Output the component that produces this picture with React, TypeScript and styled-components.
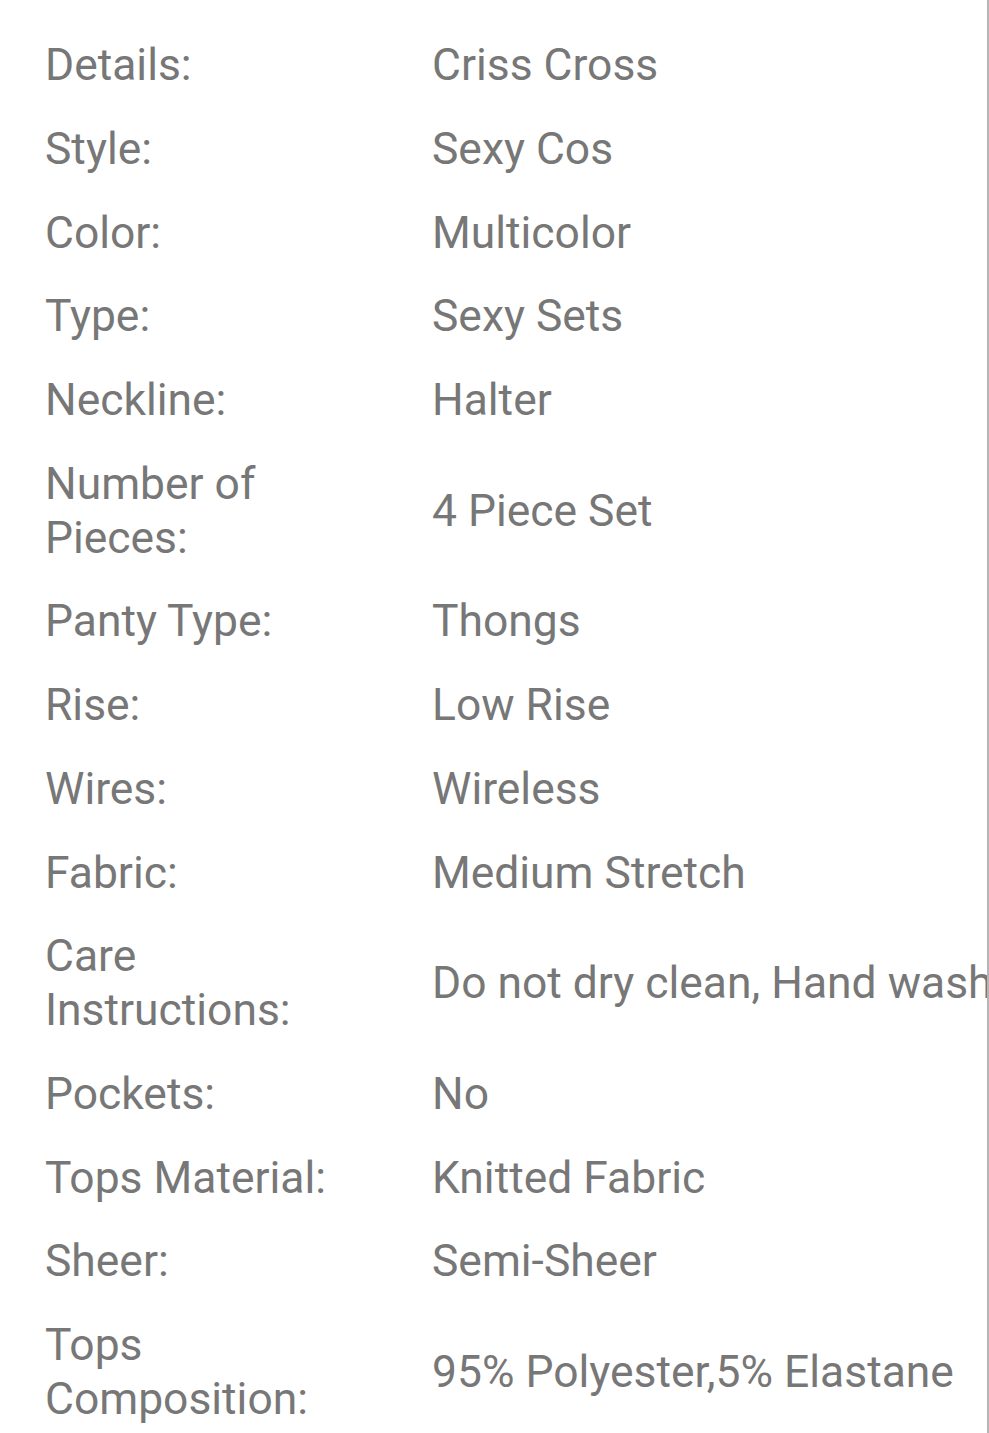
import React from "react";
import styled, { createGlobalStyle } from "styled-components";

const GlobalStyle = createGlobalStyle`
  html, body {
    margin: 0;
    padding: 0;
    background: #ffffff;
  }
  body {
    font-family: Roboto, "Noto Sans", "Liberation Sans", sans-serif;
  }
`;

const Panel = styled.div`
  width: 989px;
  min-height: 100vh;
  box-sizing: border-box;
  border-right: 2px solid #b5b5b5;
  overflow: hidden;
  padding: 24px 0 0 45px;
  background: #fff;
`;

const Table = styled.div`
  display: grid;
  grid-template-columns: 387px 1fr;
`;

const Cell = styled.div<{ $value?: boolean }>`
  display: flex;
  align-items: center;
  padding: 15px 0;
  font-size: 44.4px;
  line-height: 53.76px;
  color: #777777;
  white-space: ${(p) => (p.$value ? "nowrap" : "normal")};
  max-width: ${(p) => (p.$value ? "none" : "300px")};
`;

const rows: [string, string][] = [
  ["Details:", "Criss Cross"],
  ["Style:", "Sexy Cos"],
  ["Color:", "Multicolor"],
  ["Type:", "Sexy Sets"],
  ["Neckline:", "Halter"],
  ["Number of Pieces:", "4 Piece Set"],
  ["Panty Type:", "Thongs"],
  ["Rise:", "Low Rise"],
  ["Wires:", "Wireless"],
  ["Fabric:", "Medium Stretch"],
  ["Care Instructions:", "Do not dry clean, Hand wash"],
  ["Pockets:", "No"],
  ["Tops Material:", "Knitted Fabric"],
  ["Sheer:", "Semi-Sheer"],
  ["Tops Composition:", "95% Polyester,5% Elastane"],
];

export default function App() {
  return (
    <>
      <GlobalStyle />
      <Panel>
        <Table>
          {rows.map(([label, value]) => (
            <React.Fragment key={label}>
              <Cell>{label}</Cell>
              <Cell $value>{value}</Cell>
            </React.Fragment>
          ))}
        </Table>
      </Panel>
    </>
  );
}
